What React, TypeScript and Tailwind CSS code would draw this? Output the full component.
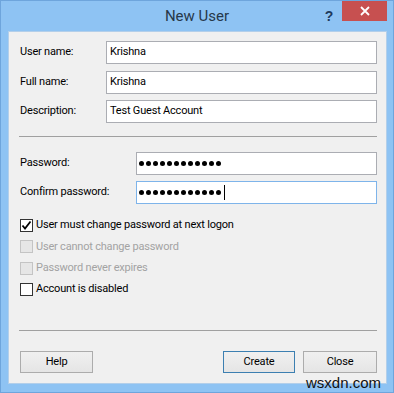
import React from "react";

function TextRow({ label, value, labelW }: { label: string; value: string; labelW: string }) {
  return (
    <div className="flex items-center h-[23px]">
      <div className={`${labelW} shrink-0`}>{label}</div>
      <div className="flex-1 h-full bg-white border border-[#abadb3] flex items-center pl-[3px]">{value}</div>
    </div>
  );
}

function Dots({ caret }: { caret?: boolean }) {
  return (
    <div className="flex items-center gap-[2px]">
      {Array.from({ length: 12 }).map((_, i) => (
        <div key={i} className="w-[5px] h-[5px] rounded-full bg-black" />
      ))}
      {caret && <div className="w-[1px] h-[15px] bg-black ml-[1px]" />}
    </div>
  );
}

function Check({ label, checked, disabled }: { label: string; checked?: boolean; disabled?: boolean }) {
  return (
    <div className="flex items-center h-[21.3px]">
      <div
        className={`w-[13px] h-[13px] border flex items-center justify-center ${
          disabled ? "bg-[#e6e6e6] border-[#c4c4c4]" : "bg-white border-[#333333]"
        }`}
      >
        {checked && (
          <svg width="11" height="11" viewBox="0 0 11 11">
            <path d="M1.5 5.5 L4 8.5 L9.5 1.5" fill="none" stroke="#000" strokeWidth="1.8" />
          </svg>
        )}
      </div>
      <span className={`ml-[3px] ${disabled ? "text-[#a3a3a3]" : "text-black"}`}>{label}</span>
    </div>
  );
}

function Btn({ label, w, def }: { label: string; w: string; def?: boolean }) {
  return (
    <div
      className={`${w} h-[22px] border ${
        def ? "border-[#3c7fb1]" : "border-[#acacac]"
      } bg-gradient-to-b from-[#f0f0f0] to-[#e5e5e5] flex items-center justify-center`}
    >
      {label}
    </div>
  );
}

export default function App() {
  return (
    <div className="relative w-[394px] h-[393px] bg-[#8ec3f3] border border-[#6ea5dc] flex flex-col font-['Roboto',sans-serif] text-[11px] tracking-[-0.2px] text-black overflow-hidden">
      <div className="h-[30px] flex items-center justify-center text-[15px] tracking-normal text-[#26384a] pt-[1px]">New User</div>
      <div className="absolute top-[5px] right-[60px] text-[14px] font-bold text-[#1e3a5c] font-['Liberation_Sans',sans-serif]">?</div>
      <div className="absolute top-0 right-[6px] w-[45px] h-[20px] bg-[#c75050] flex items-center justify-center">
        <svg width="10" height="10" viewBox="0 0 10 10">
          <path d="M1 1 L9 9 M9 1 L1 9" stroke="#fff" strokeWidth="1.8" />
        </svg>
      </div>
      <div className="ml-[7px] w-[379px] h-[353px] bg-[#f0f0f0] border border-[#b3cfea] flex flex-col pl-[11px] pr-[9px] pt-[9px]">
        <TextRow label="User name:" value="Krishna" labelW="w-[86px]" />
        <div className="mt-[7px]">
          <TextRow label="Full name:" value="Krishna" labelW="w-[86px]" />
        </div>
        <div className="mt-[6px]">
          <TextRow label="Description:" value="Test Guest Account" labelW="w-[86px]" />
        </div>
        <div className="mt-[13px] h-[1px] bg-[#a0a0a0] -ml-[1px]" />
        <div className="mt-[15px] flex items-center h-[23px]">
          <div className="w-[116px] shrink-0">Password:</div>
          <div className="flex-1 h-full bg-white border border-[#abadb3] flex items-center pl-[2px]">
            <Dots />
          </div>
        </div>
        <div className="mt-[6px] flex items-center h-[23px]">
          <div className="w-[116px] shrink-0">Confirm password:</div>
          <div className="flex-1 h-full bg-white border border-[#7eb4ea] flex items-center pl-[2px]">
            <Dots caret />
          </div>
        </div>
        <div className="mt-[11px] flex flex-col">
          <Check label="User must change password at next logon" checked />
          <Check label="User cannot change password" disabled />
          <Check label="Password never expires" disabled />
          <Check label="Account is disabled" />
        </div>
        <div className="mt-[30px] h-[1px] bg-[#a0a0a0] -ml-[1px]" />
        <div className="mt-[20px] flex">
          <Btn label="Help" w="w-[73px]" />
          <div className="flex-1" />
          <Btn label="Create" w="w-[72px]" def />
          <div className="w-[8px]" />
          <Btn label="Close" w="w-[74px]" />
        </div>
      </div>
      <div className="absolute right-[12px] bottom-[0px] text-[15px] tracking-normal leading-[18px] text-[#111] font-['Liberation_Sans',sans-serif]">wsxdn.com</div>
    </div>
  );
}
